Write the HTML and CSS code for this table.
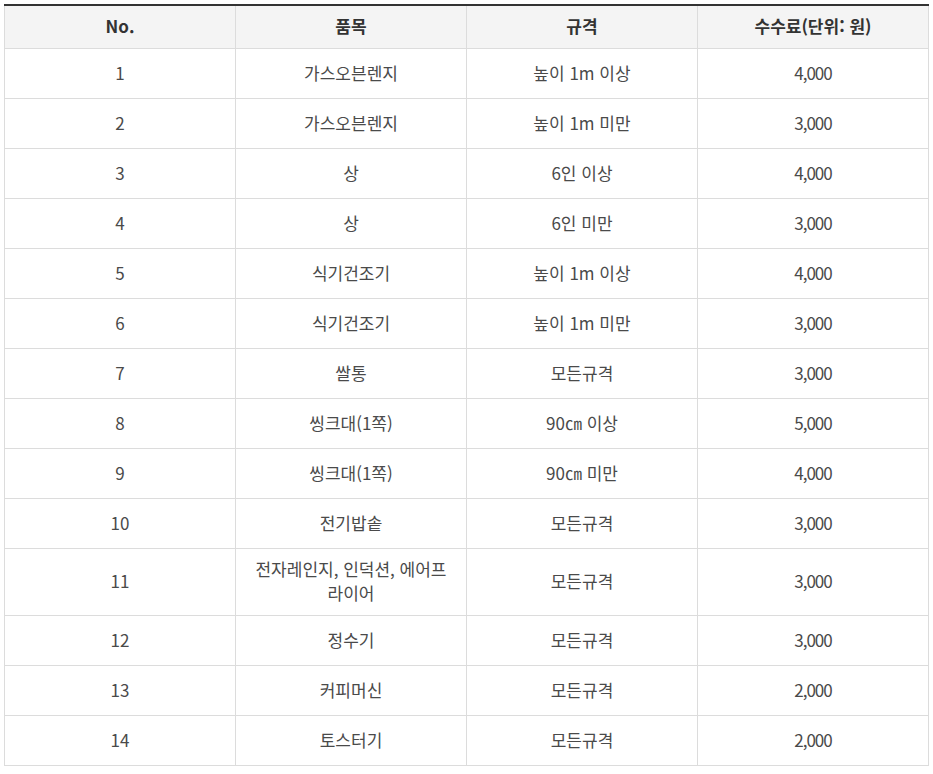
FILE: index.html
```html
<!DOCTYPE html>
<html lang="ko">
<head>
<meta charset="utf-8">
<link rel="stylesheet" href="styles.css">
</head>
<body>
<div class="wrap">
<table class="fee-table">
<thead>
<tr><th>No.</th><th>품목</th><th>규격</th><th>수수료(단위: 원)</th></tr>
</thead>
<tbody>
<tr><td>1</td><td>가스오븐렌지</td><td>높이 1m 이상</td><td class="num">4,000</td></tr>
<tr><td>2</td><td>가스오븐렌지</td><td>높이 1m 미만</td><td class="num">3,000</td></tr>
<tr><td>3</td><td>상</td><td>6인 이상</td><td class="num">4,000</td></tr>
<tr><td>4</td><td>상</td><td>6인 미만</td><td class="num">3,000</td></tr>
<tr><td>5</td><td>식기건조기</td><td>높이 1m 이상</td><td class="num">4,000</td></tr>
<tr><td>6</td><td>식기건조기</td><td>높이 1m 미만</td><td class="num">3,000</td></tr>
<tr><td>7</td><td>쌀통</td><td>모든규격</td><td class="num">3,000</td></tr>
<tr><td>8</td><td>씽크대(1쪽)</td><td>90㎝ 이상</td><td class="num">5,000</td></tr>
<tr><td>9</td><td>씽크대(1쪽)</td><td>90㎝ 미만</td><td class="num">4,000</td></tr>
<tr><td>10</td><td>전기밥솥</td><td>모든규격</td><td class="num">3,000</td></tr>
<tr class="tall"><td>11</td><td>전자레인지, 인덕션, 에어프<br>라이어</td><td>모든규격</td><td class="num">3,000</td></tr>
<tr><td>12</td><td>정수기</td><td>모든규격</td><td class="num">3,000</td></tr>
<tr><td>13</td><td>커피머신</td><td>모든규격</td><td class="num">2,000</td></tr>
<tr><td>14</td><td>토스터기</td><td>모든규격</td><td class="num">2,000</td></tr>
</tbody>
</table>
</div>
</body>
</html>
```
FILE: styles.css
```css
html, body {
  margin: 0;
  padding: 0;
  background: #fff;
}
.wrap {
  padding: 4px 4px 0 4px;
}
.fee-table {
  width: 925px;
  border-collapse: collapse;
  table-layout: fixed;
  font-family: "Noto Sans CJK KR", "Noto Sans", sans-serif;
  font-size: 17px;
  color: #4a4a4a;
  border-top: 2px solid #333;
}
.fee-table th,
.fee-table td {
  border: 1px solid #dcdcdc;
  text-align: center;
  vertical-align: middle;
  line-height: 24px;
  padding: 8px 10px 10px;
}
.fee-table th {
  background: #f4f4f4;
  color: #333;
  font-weight: 700;
  height: 23px;
  border-top: none;
}
.fee-table tbody tr {
  height: 50px;
}
.fee-table tbody td {
  height: 31px;
}
.fee-table .num {
  letter-spacing: -1px;
}
```
